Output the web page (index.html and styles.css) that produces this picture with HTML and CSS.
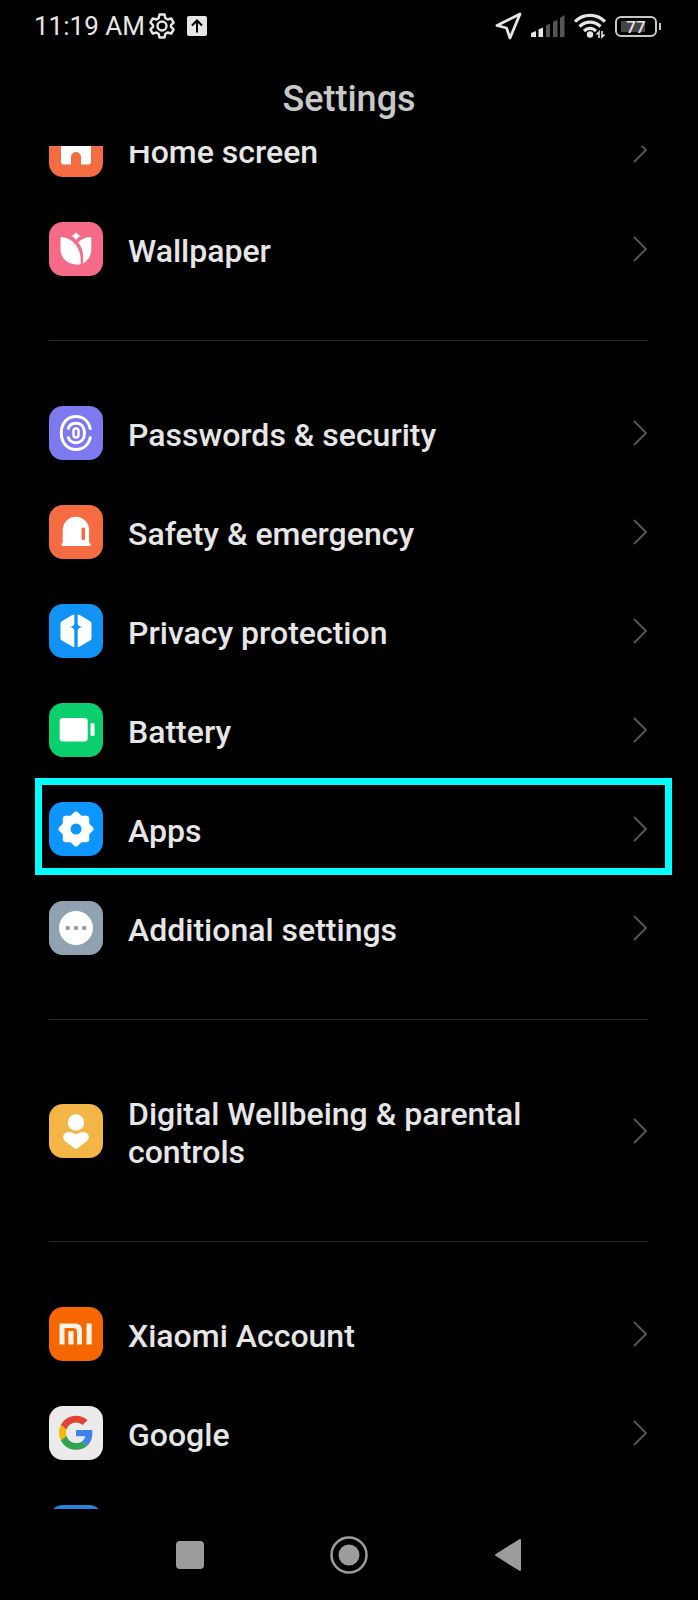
FILE: index.html
```html
<!DOCTYPE html>
<html lang="en">
<head>
    <meta charset="UTF-8">
    <meta name="viewport" content="width=device-width, initial-scale=1.0">
    <title>Settings</title>
    <link rel="stylesheet" href="styles.css">
</head>
<body>
    <svg class="defs" aria-hidden="true">
        <symbol id="chevron" viewBox="0 0 14 26">
            <path d="M1 1L13 13L1 25" fill="none" stroke="currentColor" stroke-width="2"/>
        </symbol>
    </svg>

    <div class="status-bar">
        <span class="time">11:19 AM</span>
        <svg class="status-gear" viewBox="0 0 26 26" fill="none" stroke="#e6e6e6" stroke-width="2.4" stroke-linejoin="round">
            <path d="M10.5 1.5h5l.8 3.6 2.4 1.4 3.5-1.1 2.4 4.2-2.6 2.5v1.8l2.6 2.5-2.4 4.2-3.5-1.1-2.4 1.4-.8 3.6h-5l-.8-3.6-2.4-1.4-3.5 1.1-2.4-4.2 2.6-2.5v-1.8l-2.6-2.5 2.4-4.2 3.5 1.1 2.4-1.4z"/>
            <circle cx="13" cy="13" r="4.5"/>
        </svg>
        <svg class="status-upload" viewBox="0 0 20 20">
            <rect width="20" height="20" rx="2" fill="#e6e6e6"/>
            <path d="M10 16.5V5M5 9.5L10 4.5L15 9.5" fill="none" stroke="#000" stroke-width="2"/>
        </svg>
        <div class="status-right">
            <svg width="28" height="28" viewBox="0 0 28 28">
                <path d="M26 2L3 13.5L12.500 16L16 26z" fill="none" stroke="#e6e6e6" stroke-width="2.8" stroke-linejoin="round"/>
            </svg>
            <svg width="34" height="22" viewBox="0 0 34 22">
                <path d="M0 18l5-2v6H0zM7.500 14.500l4.500-2V22H7.500z" fill="#e6e6e6"/>
                <path d="M15 10.500l4-2V22h-4zM22 7l4.500-2.500V22H22zM29 3l4.500-3V22H29z" fill="#555"/>
            </svg>
            <svg width="32" height="26" viewBox="0 0 32 26">
                <g fill="none" stroke="#e6e6e6" stroke-width="3.2">
                    <path d="M1 8.500C9.500 .3 22.500 .3 31 8.500"/>
                    <path d="M5.500 13.500C11.500 7.600 20.500 7.600 26.500 13.500"/>
                    <path d="M10 18C13.500 14.600 18.500 14.600 22 18"/>
                </g>
                <circle cx="16" cy="21.500" r="3.200" fill="#e6e6e6"/>
                <path d="M25 25v-6l-2.500 2.500M28 18v6l2.500-2.500" fill="none" stroke="#e6e6e6" stroke-width="1.600"/>
            </svg>
            <div class="battery"><span>77</span></div>
        </div>
    </div>

    <header>
        <h1>Settings</h1>
    </header>

    <main class="settings">
        <div class="settings-list">
            <a class="row" href="#home">
                <svg class="icon" viewBox="0 0 54 54">
                    <rect width="54" height="54" rx="14" fill="#f56c42"/>
                    <path d="M12 24q0-2 1.500-3L25 12q2-1.500 4 0l11.500 9q1.500 1 1.500 3v15q0 2.500-2.500 2.500H32V34a5 5 0 0 0-10 0v7.500h-7.500Q12 41.500 12 39z" fill="#fff"/>
                </svg>
                <span class="label">Home screen</span>
                <svg class="chevron"><use href="#chevron"/></svg>
            </a>
            <a class="row" href="#wallpaper">
                <svg class="icon" viewBox="0 0 54 54">
                    <rect width="54" height="54" rx="14" fill="#f56b87"/>
                    <path d="M27 10.500q2 2.300 4.500 3.500q-3 1.400-4.500 4q-1.500-2.600-4.500-4q2.500-1.200 4.500-3.500z" fill="#fff"/>
                    <path d="M12.500 15C22 15.500 33.500 24.500 31.500 42.500C20 43.500 11.500 37 11.500 27V16q0-1 1-1z" fill="#fff"/>
                    <path d="M41.500 15q.8 0 .8 1V27q0 10-8.600 14.500C35 32 33.500 25.500 29 20.500C32.500 17 36.500 15.400 41.500 15z" fill="#fff"/>
                </svg>
                <span class="label">Wallpaper</span>
                <svg class="chevron"><use href="#chevron"/></svg>
            </a>
            <hr>
            <a class="row" href="#passwords">
                <svg class="icon" viewBox="0 0 54 54">
                    <rect width="54" height="54" rx="14" fill="#7d79ef"/>
                    <g fill="none" stroke="#fff" stroke-width="3">
                        <path d="M41.500 23.800C40 15.500 34.500 10.500 27 10.500C18.500 10.500 12.300 17 12.300 27S18.500 43.500 27 43.500C34.500 43.500 40 38.500 41.500 30.500"/>
                        <path d="M19 23.500C20 19.500 23 17.300 27 17.300C32 17.300 35.500 21 35.500 27S32 36.700 27 36.700C23 36.700 20 34.500 19 30.500"/>
                        <rect x="24.500" y="22.500" width="5" height="9" rx="2.500" stroke-width="2.500"/>
                    </g>
                </svg>
                <span class="label">Passwords &amp; security</span>
                <svg class="chevron"><use href="#chevron"/></svg>
            </a>
            <a class="row" href="#safety">
                <svg class="icon" viewBox="0 0 54 54">
                    <rect width="54" height="54" rx="14" fill="#f56c42"/>
                    <path d="M13.700 38V25a13.200 13.200 0 0 1 26.400 0v13q1.600 0 1.600 1.500T40 41H14q-1.500 0-1.500-1.500T13.700 38z" fill="#fff"/>
                    <rect x="32.500" y="22.500" width="3.500" height="12.500" rx="1.500" fill="#f56c42"/>
                </svg>
                <span class="label">Safety &amp; emergency</span>
                <svg class="chevron"><use href="#chevron"/></svg>
            </a>
            <a class="row" href="#privacy">
                <svg class="icon" viewBox="0 0 54 54">
                    <rect width="54" height="54" rx="14" fill="#1093f5"/>
                    <path d="M25.300 10.500v32.500q-1 0-2-.6L12.800 36.500q-1.300-.8-1.300-2.200V19.500q0-1.400 1.300-2.200l10.500-6.200q1-.6 2-.6zM28.700 10.500v32.500q1 0 2-.6l10.500-5.900q1.300-.8 1.300-2.200V19.500q0-1.400-1.300-2.200l-10.500-6.200q-1-.6-2-.6z" fill="#fff"/>
                    <path d="M27 16.500q.8 5.500 6 6.500q-5.200 1-6 6.500q-.8-5.500-6-6.500q5.200-1 6-6.500z" fill="#1093f5"/>
                </svg>
                <span class="label">Privacy protection</span>
                <svg class="chevron"><use href="#chevron"/></svg>
            </a>
            <a class="row" href="#battery">
                <svg class="icon" viewBox="0 0 54 54">
                    <rect width="54" height="54" rx="14" fill="#0bcf6c"/>
                    <rect x="10.700" y="15" width="28" height="23.500" rx="3" fill="#fff"/>
                    <rect x="41.500" y="20" width="4" height="13" rx="1.500" fill="#fff"/>
                </svg>
                <span class="label">Battery</span>
                <svg class="chevron"><use href="#chevron"/></svg>
            </a>
            <a class="row highlighted" href="#apps">
                <svg class="icon" viewBox="0 0 54 54">
                    <rect width="54" height="54" rx="14" fill="#0d96ff"/>
                    <rect x="13.800" y="13.800" width="26.400" height="26.400" rx="3" fill="#fff"/>
                    <rect x="13.800" y="13.800" width="26.400" height="26.400" rx="3" fill="#fff" transform="rotate(45 27 27)"/>
                    <circle cx="27" cy="27" r="5.500" fill="#0d96ff"/>
                </svg>
                <span class="label">Apps</span>
                <svg class="chevron"><use href="#chevron"/></svg>
            </a>
            <a class="row" href="#additional">
                <svg class="icon" viewBox="0 0 54 54">
                    <rect width="54" height="54" rx="14" fill="#8fa2b1"/>
                    <circle cx="27" cy="27" r="17" fill="#fff"/>
                    <g fill="#8fa2b1">
                        <circle cx="18.800" cy="27" r="2.300"/>
                        <circle cx="27" cy="27" r="2.300"/>
                        <circle cx="35.200" cy="27" r="2.300"/>
                    </g>
                </svg>
                <span class="label">Additional settings</span>
                <svg class="chevron"><use href="#chevron"/></svg>
            </a>
            <hr>
            <a class="row" href="#wellbeing">
                <svg class="icon" viewBox="0 0 54 54">
                    <rect width="54" height="54" rx="14" fill="#f3b545"/>
                    <circle cx="27" cy="18.500" r="8.300" fill="#fff"/>
                    <path d="M27 30.500C31 27.500 36 27 38.500 29.500C40.500 32 40 35.500 37.500 37.500L28.500 44.300q-1.500 1-3 0L16.500 37.500C14 35.500 13.500 32 15.500 29.500C18 27 23 27.500 27 30.500z" fill="#fff"/>
                </svg>
                <span class="label">Digital Wellbeing &amp; parental controls</span>
                <svg class="chevron"><use href="#chevron"/></svg>
            </a>
            <hr>
            <a class="row" href="#xiaomi">
                <svg class="icon" viewBox="0 0 54 54">
                    <rect width="54" height="54" rx="14" fill="#f66700"/>
                    <g fill="#fff2e8">
                        <path d="M10.500 16.500h15.500q7 0 7 7v14h-5V25q0-4-4-4h-8.500v16.500h-5z"/>
                        <rect x="19.300" y="24" width="5.200" height="13.500"/>
                        <rect x="37.500" y="16.500" width="5.200" height="21"/>
                    </g>
                </svg>
                <span class="label">Xiaomi Account</span>
                <svg class="chevron"><use href="#chevron"/></svg>
            </a>
            <a class="row" href="#google">
                <svg class="icon" viewBox="0 0 54 54">
                    <rect width="54" height="54" rx="14" fill="#ebebeb"/>
                    <g transform="translate(10 9.700) scale(.71)">
                        <path fill="#e04236" d="M24 9.500c3.540 0 6.710 1.220 9.210 3.600l6.850-6.850C35.900 2.380 30.470 0 24 0 14.620 0 6.510 5.380 2.560 13.220l7.980 6.190C12.430 13.720 17.740 9.500 24 9.500z"/>
                        <path fill="#4080ea" d="M46.980 24.550c0-1.570-.15-3.090-.38-4.550H24v9.020h12.940c-.58 2.960-2.260 5.480-4.780 7.180l7.730 6c4.510-4.180 7.090-10.360 7.090-17.650z"/>
                        <path fill="#f5b90c" d="M10.530 28.590c-.48-1.450-.76-2.990-.76-4.590s.27-3.140.76-4.590l-7.980-6.190C.92 16.460 0 20.120 0 24c0 3.880.92 7.540 2.560 10.780l7.970-6.190z"/>
                        <path fill="#31a350" d="M24 48c6.480 0 11.930-2.130 15.890-5.810l-7.730-6c-2.150 1.450-4.920 2.300-8.160 2.300-6.260 0-11.570-4.220-13.470-9.910l-7.980 6.190C6.510 42.620 14.620 48 24 48z"/>
                    </g>
                </svg>
                <span class="label">Google</span>
                <svg class="chevron"><use href="#chevron"/></svg>
            </a>
            <a class="row" href="#more" aria-label="More">
                <svg class="icon" viewBox="0 0 54 54">
                    <rect width="54" height="54" rx="14" fill="#2684d9"/>
                </svg>
            </a>
        </div>
    </main>

    <nav class="nav-bar">
        <button aria-label="Recent apps">
            <svg width="28" height="28" viewBox="0 0 28 28"><rect width="28" height="28" rx="4" fill="#9c9c9c"/></svg>
        </button>
        <button aria-label="Home">
            <svg width="38" height="38" viewBox="0 0 38 38">
                <circle cx="19" cy="19" r="17.500" fill="none" stroke="#9c9c9c" stroke-width="2.500"/>
                <circle cx="19" cy="19" r="10.500" fill="#9c9c9c"/>
            </svg>
        </button>
        <button aria-label="Back">
            <svg width="26" height="32" viewBox="0 0 26 32"><path d="M25 1v30L1 16z" fill="#9c9c9c" stroke="#9c9c9c" stroke-width="2" stroke-linejoin="round"/></svg>
        </button>
    </nav>
</body>
</html>
```
FILE: styles.css
```css
* {
    box-sizing: border-box;
}
body {
    display: flex;
    flex-direction: column;
    height: 100vh;
    margin: 0;
    background-color: #000;
    color: #e6e6e6;
    font-family: Roboto, sans-serif;
}
svg {
    display: block;
    flex-shrink: 0;
}
.defs {
    position: absolute;
    width: 0;
    height: 0;
}

/* Status bar */
.status-bar {
    display: flex;
    align-items: center;
    height: 52px;
    padding: 0 37px 0 34px;
}
.time {
    font-size: 26px;
    line-height: 52px;
}
.status-gear {
    width: 26px;
    height: 26px;
    margin-left: 4px;
}
.status-upload {
    width: 20px;
    height: 20px;
    margin-left: 12px;
}
.status-right {
    display: flex;
    align-items: center;
    gap: 9px;
    margin-left: auto;
}
.battery {
    position: relative;
    width: 42px;
    height: 21px;
    margin-right: 4px;
    border: 2px solid #c8c8c8;
    border-radius: 6px;
    background: linear-gradient(#444, #444) 4px center / 24px 11px no-repeat;
    font-size: 17px;
    font-weight: 500;
    line-height: 18px;
    text-align: center;
}
.battery::after {
    content: "";
    position: absolute;
    top: 5px;
    right: -6px;
    width: 2px;
    height: 7px;
    background-color: #c8c8c8;
}

header {
    height: 94px;
}
h1 {
    margin: 0;
    color: #c8c8c8;
    font-size: 36px;
    font-weight: 500;
    line-height: 94px;
    text-align: center;
}

/* Settings list, scrolled down a little */
.settings {
    flex: 1;
    min-height: 0;
    overflow: hidden;
}
.settings-list {
    margin-top: -46px;
    padding: 0 50px 0 49px;
}
.row {
    position: relative;
    display: flex;
    align-items: center;
    min-height: 99px;
    padding: 29px 0 28px;
    color: inherit;
    text-decoration: none;
}
.icon {
    width: 54px;
    height: 54px;
    margin: -8px 0;
}
.label {
    flex: 1;
    padding: 4px 72px 0 25px;
    font-size: 32px;
    font-weight: 500;
    line-height: 38px;
}
.chevron {
    width: 14px;
    height: 26px;
    margin-right: 1px;
    color: #555;
}
.highlighted::after {
    content: "";
    position: absolute;
    top: -1px;
    right: -24px;
    bottom: 3px;
    left: -14px;
    border: 7px solid #00ffff;
}
hr {
    height: 1px;
    margin: 42px 0;
    border: none;
    background-color: #2a2a2a;
}

/* Navigation buttons */
.nav-bar {
    display: grid;
    grid-template-columns: repeat(3, 1fr);
    height: 91px;
    padding: 0 110px;
}
.nav-bar button {
    display: flex;
    align-items: center;
    justify-content: center;
    padding: 0;
    border: none;
    background: none;
    cursor: pointer;
}
```
